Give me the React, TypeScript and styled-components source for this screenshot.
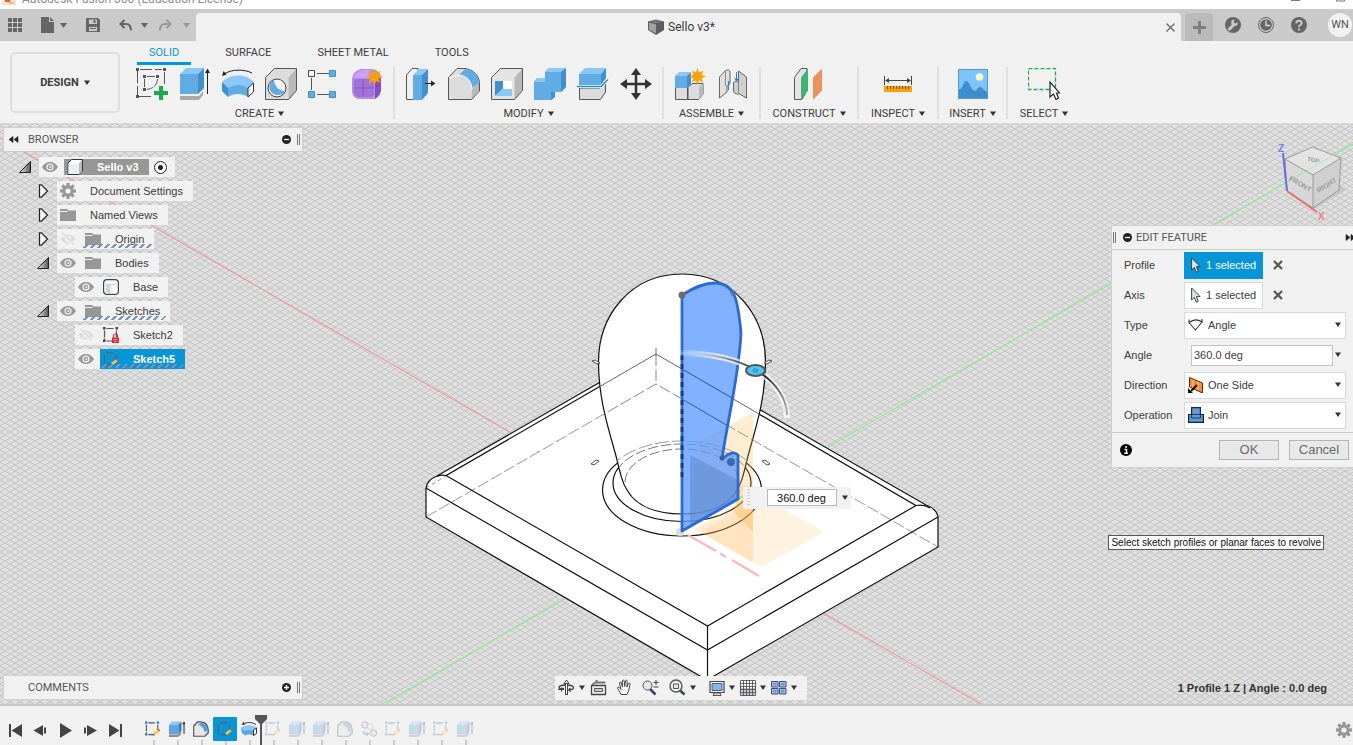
import React from "react";
import styled, { createGlobalStyle, css } from "styled-components";

const GlobalStyle = createGlobalStyle`
  *, *::before, *::after { box-sizing: border-box; }
  html, body { margin: 0; padding: 0; }
  body { font-family: "Liberation Sans", Arial, sans-serif; font-size: 11px; color: #3c3c3c; background: #f1f1f1; overflow: hidden; }
  button, input, select { font: inherit; color: inherit; margin: 0; }
  button { padding: 0; border: 0; background: none; }
  ul { list-style: none; margin: 0; padding: 0; }
  svg { display: block; flex: none; }
`;

const UI_FONT = `Roboto, "Liberation Sans", sans-serif`;

const Page = styled.div`
  display: flex;
  flex-direction: column;
  height: 100vh;
`;

/* ---------- window title and document tabs ---------- */

const TitleBar = styled.header`
  display: flex;
  align-items: flex-end;
  flex: none;
  height: 9px;
  overflow: hidden;
  background: #fff;
  color: #8c8c8c;
  font: 12px/16px ${UI_FONT};
  padding: 0 8px 2px 2px;
  gap: 6px;
`;

const WindowButtons = styled.div`
  display: flex;
  gap: 36px;
  margin-left: auto;
`;

const TabBar = styled.div`
  display: flex;
  align-items: center;
  flex: none;
  height: 32px;
  background: #cacaca;
  color: #666;
`;

const QuickBar = styled.div`
  display: flex;
  align-items: center;
  gap: 19px;
  width: 196px;
  padding-left: 8px;
`;

const QuickGroup = styled.div<{ $gap: number }>`
  display: flex;
  align-items: center;
  gap: ${(p) => p.$gap}px;
`;

const IconButton = styled.button<{ $w?: number; $h?: number }>`
  display: flex;
  align-items: center;
  justify-content: center;
  flex: none;
  ${(p) => p.$w && css`width: ${p.$w}px;`}
  ${(p) => p.$h && css`height: ${p.$h}px;`}
`;

const DocumentTab = styled.div`
  display: flex;
  align-items: center;
  align-self: flex-end;
  flex: 1;
  height: 28px;
  border-radius: 4px 4px 0 0;
  background: #f1f1f1;
  padding-right: 4px;
`;

const DocumentName = styled.div`
  display: flex;
  align-items: center;
  justify-content: center;
  flex: 1;
  gap: 4px;
  padding-left: 4px;
  color: #3c3c3c;
  font: 12px/16px ${UI_FONT};
`;

const NewTab = styled(IconButton)`
  align-self: flex-end;
  width: 28px;
  height: 28px;
  margin: 0 12px 0 4px;
  border-radius: 4px 4px 0 0;
  background: #bababa;
`;

const AccountArea = styled.div`
  display: flex;
  align-items: center;
  gap: 17px;
  padding-right: 1px;
`;

const Avatar = styled.button`
  width: 24px;
  height: 24px;
  margin-left: 4px;
  border-radius: 50%;
  background: #f1f1f1;
  color: #555;
  font: 11px/24px ${UI_FONT};
  text-align: center;
`;

/* ---------- ribbon ---------- */

const Ribbon = styled.div`
  display: flex;
  flex: none;
  height: 82px;
  background: #f1f1f1;
`;

const WorkspaceButton = styled.button`
  width: 110px;
  height: 61px;
  margin: 11px 6px 0 10px;
  border: 2px solid #dedede;
  border-radius: 5px;
  display: flex;
  align-items: center;
  justify-content: center;
  gap: 5px;
  font: 700 11px/16px ${UI_FONT};
`;

const RibbonMain = styled.div`
  flex: 1;
`;

const RibbonTabs = styled.nav`
  display: flex;
  gap: 22px;
  height: 24px;
  padding-left: 11px;
`;

const RibbonTab = styled.a<{ $active?: boolean }>`
  padding: 4px 12px 0;
  font: 11px/16px ${UI_FONT};
  text-decoration: none;
  color: ${(p) => (p.$active ? "#0696d7" : "#3c3c3c")};
  border-bottom: 3px solid ${(p) => (p.$active ? "#0696d7" : "transparent")};
`;

const RibbonGroups = styled.div`
  display: flex;
  margin-top: 2px;
`;

const Group = styled.section<{ $w: number; $last?: boolean }>`
  display: flex;
  flex-direction: column;
  align-items: center;
  width: ${(p) => p.$w}px;
  height: 52px;
  padding-top: 1px;
  border-right: ${(p) => (p.$last ? 0 : 2)}px solid #e0e0e0;
`;

const GroupTools = styled.div`
  display: flex;
  gap: 11px;
`;

const GroupLabel = styled.button`
  display: flex;
  align-items: center;
  gap: 4px;
  margin-top: 5px;
  font: 11px/18px ${UI_FONT};
  white-space: nowrap;
`;

/* ---------- canvas and what floats over it ---------- */

const Viewport = styled.main`
  position: relative;
  flex: 1;
  min-height: 0;
  overflow: hidden;
  background: #dfdfdf;
`;

const Scene = styled.svg`
  position: absolute;
  inset: 0;
  width: 100%;
  height: 100%;
`;

const ViewCube = styled.svg`
  position: absolute;
  top: 17px;
  right: 0;
`;

const BrowserArea = styled.aside`
  position: absolute;
  top: 4px;
  left: 3px;
  width: 300px;
`;

const PanelBar = styled.div`
  display: flex;
  align-items: center;
  width: 300px;
  height: 25px;
  padding: 0 2px 0 4px;
  background: #f1f1f1;
  border: 1px solid #cfcfcf;
  color: #555;
  font: 11px/16px ${UI_FONT};
`;

const PanelName = styled.span`
  flex: 1;
  margin-left: 9px;
`;

const Grip = styled.span`
  width: 3px;
  height: 11px;
  margin-left: 6px;
  border: solid #777;
  border-width: 0 1px;
`;

const PanelGrip = styled(Grip)`
  margin: 0 7px 0 0;
`;

const CommentsIndent = styled.span`
  width: 11px;
`;

const Tree = styled.ul`
  display: flex;
  flex-direction: column;
  gap: 4px;
  padding-top: 5px;
`;

const TreeRow = styled.li<{ $level: number }>`
  display: flex;
  align-items: center;
  height: 20px;
  padding-left: ${(p) => p.$level * 18 + 15}px;
`;

const TreeToggle = styled(IconButton)`
  width: 14px;
  height: 14px;
  margin-right: 7px;
`;

const NoToggle = styled.span`
  width: 21px;
`;

const TreeItem = styled.div`
  display: flex;
  align-items: center;
  height: 20px;
  background: #f1f1f1;
`;

const EyeButton = styled(IconButton)`
  width: 25px;
  padding: 0 6px 0 3px;
`;

const TreeLabel = styled.div<{ $tone?: "root" | "selected"; $hatch?: boolean }>`
  position: relative;
  display: flex;
  align-items: center;
  gap: 14px;
  height: ${(p) => (p.$tone === "root" ? 16 : 20)}px;
  padding: 0 10px 0 3px;
  line-height: 16px;
  ${(p) => p.$tone && css`color: #fff; font-weight: 700;`}
  ${(p) => p.$tone === "root" && css`background: #979797;`}
  ${(p) => p.$tone === "selected" && css`background: #0696d7;`}
  ${(p) =>
    p.$hatch &&
    css`
      &::after {
        content: "";
        position: absolute;
        left: 0;
        right: 2px;
        bottom: 1px;
        height: 4px;
        background: repeating-linear-gradient(135deg, transparent 0 3px, #7d91b8 3px 5px);
      }
    `}
`;

const ActiveRadio = styled.input`
  appearance: none;
  width: 13px;
  height: 13px;
  margin: 0 8px 0 5px;
  border: 1px solid #222;
  border-radius: 50%;
  background: radial-gradient(circle, #222 0 2px, #fff 3px);
`;

const FeaturePanel = styled.form`
  position: absolute;
  top: 102px;
  right: 0;
  width: 242px;
  background: #f1f1f1;
  border: 1px solid #cfcfcf;
  border-right: 0;
  line-height: 16px;
`;

const FeatureHead = styled.div`
  display: flex;
  align-items: center;
  height: 24px;
  padding-left: 1px;
  border-bottom: 1px solid #cfcfcf;
  color: #555;
  font: 11px/16px ${UI_FONT};
`;

const FeatureTitle = styled.span`
  flex: 1;
  margin-left: 4px;
`;

const Fields = styled.div`
  padding: 0 7px 2px 12px;
  border-bottom: 1px solid #cfcfcf;
`;

const Field = styled.div`
  display: flex;
  align-items: center;
  height: 30px;
`;

const FieldLabel = styled.label`
  flex: none;
  width: 60px;
`;

const Picker = styled.button<{ $active?: boolean }>`
  display: flex;
  align-items: center;
  gap: 5px;
  width: 79px;
  height: 27px;
  padding-left: 6px;
  border: 1px solid ${(p) => (p.$active ? "#0696d7" : "#d9d9d9")};
  background: ${(p) => (p.$active ? "#0696d7" : "#fff")};
  color: ${(p) => (p.$active ? "#fff" : "#3c3c3c")};
  white-space: nowrap;
`;

const ClearButton = styled(IconButton)`
  width: 20px;
  height: 20px;
  margin-left: 5px;
`;

const SelectBox = styled.div`
  display: flex;
  align-items: center;
  flex: 1;
  height: 27px;
  padding: 0 4px 0 3px;
  border: 1px solid #d9d9d9;
  background: #fff;
`;

const BareSelect = styled.select`
  appearance: none;
  flex: 1;
  min-width: 0;
  border: 0;
  padding: 0 0 0 4px;
  background: transparent;
  outline: 0;
`;

const AngleRow = styled.div`
  display: flex;
  align-items: center;
  flex: 1;
  min-width: 0;
  padding: 0 5px 0 7px;
  gap: 2px;
`;

const AngleInput = styled.input`
  flex: 1;
  min-width: 0;
  height: 21px;
  padding: 0 2px;
  border: 1px solid #c4c4c4;
  background: #fff;
`;

const FeatureFoot = styled.div`
  display: flex;
  align-items: center;
  gap: 10px;
  height: 34px;
  padding: 0 4px 0 8px;
`;

const DialogButton = styled.button`
  width: 60px;
  height: 20px;
  border: 1px solid #b5b5b5;
  background: #e8e8e8;
  color: #6a6a6a;
  font-size: 13px;
`;

const Spacer = styled.span`
  flex: 1;
`;

const FloatingInput = styled.div`
  position: absolute;
  left: calc(50% + 66px);
  top: calc(50% + 73px);
  display: flex;
  align-items: center;
  gap: 5px;
  width: 108px;
  height: 22px;
  padding: 0 2px 0 4px;
  background: #f1f1f1;
`;

const FloatGrip = styled.span`
  width: 3px;
  height: 18px;
  margin-right: 12px;
  background: repeating-linear-gradient(#cfcfcf 0 1px, transparent 1px 3px);
`;

const FloatValue = styled.input`
  width: 70px;
  height: 17px;
  padding: 0;
  border: 1px solid #b9b9b9;
  background: #fff;
  color: #111;
  text-align: center;
`;

const Tooltip = styled.div`
  position: absolute;
  right: 29px;
  top: 412px;
  height: 15px;
  padding: 0 2px;
  border: 1px solid #555;
  background: #fdfdfd;
  color: #111;
  font: 10px/13px "Liberation Sans", sans-serif;
  white-space: nowrap;
`;

const BottomOverlay = styled.div`
  position: absolute;
  left: 0;
  right: 0;
  bottom: 4px;
  display: grid;
  grid-template-columns: 1fr auto 1fr;
  align-items: center;
  padding-left: 3px;
`;

const NavBar = styled.div`
  display: flex;
  align-items: center;
  width: 252px;
  height: 24px;
  padding-left: 3px;
  background: #f1f1f1;
  margin-left: 6px;
`;

const NavItem = styled.button<{ $w: number }>`
  display: flex;
  align-items: center;
  gap: 4px;
  width: ${(p) => p.$w}px;
`;

const Status = styled.output`
  justify-self: end;
  padding-right: 26px;
  font: 700 11px/16px "Liberation Sans", sans-serif;
  color: #333;
`;

/* ---------- timeline ---------- */

const Timeline = styled.footer`
  display: flex;
  flex: none;
  height: 41px;
  padding-left: 3px;
  border-top: 2px solid #c9c9c9;
  background: #f1f1f1;
`;

const PlayButton = styled(IconButton)`
  width: 25px;
  height: 36px;
  margin-top: 6px;
`;

const SettingsButton = styled(IconButton)`
  width: 18px;
  height: 36px;
  margin-top: 6px;
`;

const Steps = styled.ol`
  display: flex;
  list-style: none;
  margin: 0 0 0 13px;
  padding: 11px 0 0;
`;

const Step = styled.li<{ $selected?: boolean; $future?: boolean }>`
  position: relative;
  width: 24px;
  height: 28px;
  background: linear-gradient(#c9c9c9, #c9c9c9) 12px 23px / 2px 5px no-repeat;
  & > button {
    width: 24px;
    height: 24px;
    background: ${(p) => (p.$selected ? "#0696d7" : "transparent")};
    border-radius: 1px;
  }
  & svg {
    opacity: ${(p) => (p.$future ? 0.3 : 1)};
  }
`;

const PlayheadAnchor = styled.span`
  position: relative;
  width: 0;
  height: 28px;
  margin: 11px 0 0 -216px;
`;

const Playhead = styled.svg`
  position: absolute;
  top: -3px;
  left: -7px;
`;

/* ---------- drawings ---------- */

type SvgProps = { s?: number; w?: number; h?: number; vb?: string; children: React.ReactNode };
const Svg = ({ s = 32, w, h, vb, children }: SvgProps) => (
  <svg width={w ?? s} height={h ?? s} viewBox={vb ?? `0 0 ${w ?? s} ${h ?? s}`} fill="none" aria-hidden="true">
    {children}
  </svg>
);

const Caret = ({ color = "#333" }: { color?: string }) => (
  <Svg w={6} h={6}><path d="M0 .5h6L3 5z" fill={color} /></Svg>
);

const BigCaret = ({ color }: { color: string }) => (
  <Svg w={7} h={5}><path d="M0 0h7L3.500 5z" fill={color} /></Svg>
);

const GearIcon = ({ color = "#979797" }: { color?: string }) => (
  <Svg s={16}>
    {[0, 45, 90, 135].map((a) => (
      <path key={a} d="M6.4 0h3.2v16H6.4z" fill={color} transform={`rotate(${a} 8 8)`} />
    ))}
    <circle cx="8" cy="8" r="5.8" fill={color} />
    <circle cx="8" cy="8" r="2.6" fill="#f1f1f1" />
  </Svg>
);

const EyeIcon = () => (
  <Svg s={16}>
    <path d="M0 8C2 4.5 4.800 3 8 3s6 1.500 8 5c-2 3.500-4.800 5-8 5S2 11.500 0 8z" fill="#979797" />
    <circle cx="8" cy="8" r="3.600" fill="#f1f1f1" />
    <circle cx="8" cy="8" r="2.300" fill="#979797" />
    <circle cx="8.300" cy="8" r="1" fill="#f1f1f1" />
  </Svg>
);

const HiddenEyeIcon = () => (
  <Svg s={16}>
    <path d="M0.500 8C2.500 5 5 3.500 8 3.500S13.500 5 15.500 8c-2 3-4.500 4.500-7.500 4.500S2.500 11 .5 8z" fill="#dcdcdc" />
    <circle cx="8" cy="8" r="3" fill="#f1f1f1" />
    <circle cx="8" cy="8" r="1.800" fill="#dcdcdc" />
    <path d="M2 2.500 14 14" stroke="#f1f1f1" strokeWidth="3" />
    <path d="M2.500 2 14 13.500" stroke="#dcdcdc" strokeWidth="1.500" />
  </Svg>
);

const FolderIcon = () => (
  <Svg s={16}>
    <path d="M0 2h7l1.500 1.500H16V14H0z" fill="#979797" />
    <path d="M0 4.500h7.500" stroke="#f1f1f1" />
  </Svg>
);

const CubeIcon = () => (
  <Svg s={16}>
    <path d="M1 4 4.500.5h11V12L12 15.500H1z" fill="#fff" stroke="#333" />
    <path d="m12 4 3-3V12L12 15z" fill="#bcbcbc" />
    <path d="M1.500 4.500h10.500v10.500h-10.500z" fill="#eceef2" />
  </Svg>
);

const CylinderIcon = () => (
  <Svg s={16}>
    <rect x=".6" y=".6" width="14.800" height="14.800" rx="3.500" fill="#fff" stroke="#3a4054" strokeWidth="1.200" />
    <path d="M3 5.500h4.500v9H4.500q-1.500-.5-1.500-2z" fill="#d0d2d9" />
    <path d="M7.500 5.500h2v9h-2z" fill="#eceef2" />
    <path d="M2 4.500c3 1.800 9 1.800 12 0" stroke="#c9ccd3" />
  </Svg>
);

const SketchBox = ({ dark, blue }: { dark?: boolean; blue?: boolean }) => (
  <>
    <path d="M1.500 3.500v10M13.500 3.500v8M3.500 1.500h8M3.500 14h7" stroke={dark ? "#6b5a50" : "#555"} strokeWidth="1.200" strokeDasharray="7 1" />
    {!dark && [[0, 0], [12.5, 0], [0, 12.5]].map(([x, y]) => (
      <rect key={`${x}-${y}`} x={x} y={y} width="2.500" height="2.500" fill={blue ? "#1c8ae0" : "#444"} />
    ))}
  </>
);

const Pencil = () => (
  <g>
    <path d="m8.500 14.500 1.200-3 4-3.300 1.800 2.200-4 3.300z" fill="#ffc04a" />
    <path d="m13.500 8.300 1-.8 1.900 2-1 .9z" fill="#e84c3d" />
    <path d="m8.300 14.800.6-1.500 1 1.200z" fill="#444" />
  </g>
);

const SketchIcon = ({ selected }: { selected?: boolean }) => (
  <Svg s={16} vb="0 0 17 16"><SketchBox dark={selected} blue /><Pencil /></Svg>
);

const LockedSketchIcon = () => (
  <Svg s={16}>
    <SketchBox />
    <path d="M9 10.500h7V16H9z" fill="#cf2b32" />
    <path d="M10.500 10.500V9a2 2 0 0 1 4 0v1.500" stroke="#cf2b32" strokeWidth="1.200" />
    <path d="M10.500 12.500h4M10.500 14.300h4" stroke="#f6a5a5" strokeWidth=".8" />
  </Svg>
);

const MiniExtrude = () => (
  <Svg s={16}>
    <path d="M0 13.500h9l3-2.500v2.500L9 16H0z" fill="#8d8d8d" />
    <path d="M0 3.500h9.500V13H0z" fill="#5ca7e0" />
    <path d="M0 3.500 3 .5h9.500l-3 3z" fill="#8cc9f7" />
    <path d="m9.500 3.500 3-3V10l-3 3z" fill="#2f7fc2" />
    <path d="M15 13V2M13.800 3.500 15 1l1 2.500" stroke="#222" />
  </Svg>
);

const MiniFillet = () => (
  <Svg s={16}>
    <path d="M.8 5 4.500.8H8c4.500.5 7 4 7.200 8V12L12 15.200H.8z" fill="#dcdcdc" stroke="#555" strokeWidth="1.300" />
    <path d="M8 1.500c4 .5 6.500 4 6.500 8l-3 1.500C11 7.500 9 4.500 5 3.800z" fill="#4e9fdc" />
    <path d="M1.500 5H5c4 .3 6 4 6.500 6.500v3H1.500z" fill="#e6e6e6" />
  </Svg>
);

const MiniRevolve = () => (
  <Svg s={16}>
    <path d="M2 3c4-2 9-2 13 .5" stroke="#333" />
    <path d="M.5 3.800 2.500.8l1.500 3z" fill="#333" />
    <path d="M0 7c4-3.500 12-3.500 16 0l-1 6-3 1.500c-2.500-1.500-5.500-1.500-8 0L1 12z" fill="#5ca7e0" />
    <path d="M0 7c4-3.500 12-3.500 16 0l-3.500 3c-3-1.500-6-1.500-9 0z" fill="#8cc9f7" />
    <path d="m12.500 9 3-2v5.500l-3 2z" fill="#fff" stroke="#333" />
  </Svg>
);

const MiniPattern = () => (
  <Svg s={16}>
    <circle cx="4" cy="4" r="3.200" stroke="#555" fill="#ddd" />
    <circle cx="9" cy="5.500" r="3" stroke="#777" fill="#eee" opacity=".6" />
    <circle cx="12.500" cy="12" r="3.200" stroke="#555" fill="#ddd" />
    <path d="M3 9.500V13h4M5.500 11.300 7.300 13l-1.800 1.800" stroke="#1c7fd0" strokeWidth="1.400" />
  </Svg>
);

const CursorIcon = ({ fill = "#dfe3ec", stroke = "#333" }: { fill?: string; stroke?: string }) => (
  <Svg w={10} h={16}><path d="M.6 1v12l2.700-2.500 2 4.700 2-.9-2-4.600 3.700-.2z" fill={fill} stroke={stroke} strokeWidth=".9" /></Svg>
);

const ClearIcon = () => (
  <Svg s={10}><path d="m1 1 8 8m0-8-8 8" stroke="#555" strokeWidth="2.200" /></Svg>
);

const DownTriangle = () => (
  <Svg s={14}>
    <defs>
      <linearGradient id="open" x1="0" y1="0" x2="1" y2="0"><stop offset="0" stopColor="#eee" /><stop offset="1" stopColor="#555" /></linearGradient>
    </defs>
    <path d="M12.500 1.500v11h-11z" fill="url(#open)" stroke="#222" />
  </Svg>
);

const RightTriangle = () => (
  <Svg s={14}><path d="M3.500.8h2l6 6.200-6 6.200h-2z" fill="#f4f4f4" stroke="#222" strokeWidth="1.200" /></Svg>
);

const RoundSign = ({ plus }: { plus?: boolean }) => (
  <Svg s={9}>
    <circle cx="4.500" cy="4.500" r="4.500" fill="#222" />
    <path d={plus ? "M2 4.500h5M4.500 2v5" : "M2 4.500h5"} stroke="#fff" strokeWidth="1.300" />
  </Svg>
);

const CollapseIcon = ({ right }: { right?: boolean }) => (
  <Svg w={11} h={7}>
    <path d={right ? "M1 .5v6l4-3zM6 .5v6l4-3z" : "M5 .5v6l-4-3zM10 .5v6l-4-3z"} fill="#222" stroke="#222" strokeWidth=".6" />
  </Svg>
);

const Burst = ({ x, y, r }: { x: number; y: number; r: number }) => (
  <path
    d={Array.from({ length: 16 }, (_, i) => {
      const rad = i % 2 ? r * 0.5 : r;
      const a = (i * Math.PI) / 8;
      return `${i ? "L" : "M"}${x + rad * Math.sin(a)} ${y - rad * Math.cos(a)}`;
    }).join("") + "z"}
    fill="#f9a10b"
  />
);

const tools = {
  sketch: (
    <Svg>
      <path d="M1.500 3v24M4 1.500h22M28.500 4v14M3 28.500h14" stroke="#555" strokeDasharray="12 3" />
      <path d="M0 0h3v3H0zM27 0h3v3h-3zM0 27h3v3H0zM7 7h3v3H7zM20 7h3v3h-3zM7 20h3v3H7z" fill="#555" />
      <path d="M8.500 11v8M11 8.500h8M21.500 11c-.5 6-4 9.500-10.500 10.500" stroke="#555" strokeDasharray="9 1" />
      <path d="M23 18h4v5h5v4h-5v5h-4v-5h-5v-4h5z" fill="#1fa84a" />
    </Svg>
  ),
  extrude: (
    <Svg>
      <path d="M1 28h19l4-5v4l-4 5H1z" fill="#a9a9a9" />
      <path d="M1 6h18v20H1z" fill="#62ace4" />
      <path d="m1 6 6-6h18l-6 6z" fill="#8ac8fa" />
      <path d="m19 6 6-6v20l-6 6z" fill="#4190cc" />
      <path d="M28.500 26V3" stroke="#222" />
      <path d="m26 5 2.500-4.500L31 5z" fill="#222" />
    </Svg>
  ),
  revolve: (
    <Svg>
      <path d="M2 6c8-5 20-5 28-1" stroke="#222" />
      <path d="m0 8 1.500-5 3 3.500z" fill="#222" />
      <path d="M0 14c9-9 23-9 32 0l-6 8c-6-4-14-4-20 0z" fill="#8ac8fa" />
      <path d="M6 20c6-4 14-4 20 0v9c-6-4-14-4-20 0z" fill="#62ace4" />
      <path d="M0 14v9l6 6v-9z" fill="#4190cc" />
      <path d="m26 20 5.500-5v9L26 29z" fill="#f5f5f5" stroke="#333" />
    </Svg>
  ),
  hole: (
    <Svg>
      <path d="M.5 9.500 9.500.5h22v22l-8 9H.5z" fill="#dcdcdc" />
      <path d="M23.500 9.500l8-9v22l-8 9z" fill="#b9b9b9" />
      <path d="M.5 9.500 9.500.5h22v22l-8 9H.5z" stroke="#555" />
      <circle cx="12" cy="20" r="9" fill="#f3f3f3" stroke="#444" />
      <path d="M9 12c-8 4-5 15 4 15 3 0 6-1.500 7-4-6 0-10-4-11-11z" fill="#62ace4" />
    </Svg>
  ),
  pattern: (
    <Svg>
      <path d="M3.500 10v12M9 5.500h12M9 26.500h12" stroke="#555" />
      <path d="M.5 2.500h6v6h-6z" fill="#fff" stroke="#444" />
      <path d="M21.500 2.500h6v6h-6zM21.500 23.500h6v6h-6zM.5 23.500h6v6h-6z" fill="#62ace4" stroke="#4190cc" />
    </Svg>
  ),
  form: (
    <Svg>
      <path d="M1 11q1-8 9-10h11q9 2 9 9v11q-1 8-7 10H8q-6-1-7-7z" fill="#b68ae6" />
      <path d="M24 10q6-4 6-1v12q0 6-6 10z" fill="#8450bd" />
      <path d="M2 10q4-7 10-8h10q-7 2-3 8z" fill="#c9a2f5" />
      <path d="M3 13q0-2 2-2h6v8H3zM13 11h8q2 0 2 2v6H13zM3 21h8v8H7q-4-1-4-4zM13 21h10v5q-1 3-4 3h-6z" fill="#a272db" />
      <path d="M12 11v18M3 20h20M25 19l4-2" stroke="#6b3ba5" strokeWidth=".9" />
      <Burst x={23.500} y={9} r={8.500} />
    </Svg>
  ),
  pressPull: (
    <Svg>
      <path d="M1.500 7 7 .5h6V24l-5 7.500H1.500z" fill="#f0f0f0" stroke="#555" />
      <path d="M8 7h9v25H8z" fill="#62ace4" /><path d="m8 7 6-6h9l-6 6z" fill="#8ac8fa" /><path d="m17 7 6-6v24l-6 7z" fill="#4190cc" />
      <path d="M20 15.500h8" stroke="#222" /><path d="m26 12.500 4.500 3-4.500 3z" fill="#222" />
    </Svg>
  ),
  fillet: (
    <Svg>
      <path d="M.5 9.500 9 .5h8c8 1 14 7 14.500 14V23l-8 8.500H.5z" fill="#dcdcdc" stroke="#555" />
      <path d="M17 1c8 1 14 7 14.500 14l-7.500 5C23 13 20 9 11 7z" fill="#62ace4" />
      <path d="m24 21 7-6v8l-7.500 8z" fill="#b9b9b9" />
      <path d="M1 9.500 11 7c8 1 12.500 6 13 14" stroke="#fff" />
    </Svg>
  ),
  shell: (
    <Svg>
      <path d="M.5 9.500 9.500.5h22v22l-8 9H.5z" fill="#e4e4e4" />
      <path d="M23.500 9.500l8-9v22l-8 9z" fill="#b9b9b9" />
      <path d="M.5 9.500 9.500.5h22v22l-8 9H.5z" stroke="#555" />
      <path d="M4 13h17v15H4z" fill="#fff" />
      <path d="M4 13h8v8l-8 7z" fill="#4190cc" /><path d="m4 28 7-7h10v7z" fill="#8ac8fa" />
    </Svg>
  ),
  combine: (
    <Svg>
      <path d="M0 14 3 10h8V4l4-4h17v19l-5 5h-6v5l-4 3H0z" fill="#62ace4" />
      <path d="m11 4 4-4h17l-5 4zM0 14l4-4h7v4z" fill="#8ac8fa" />
      <path d="m27 4 5-4v19l-5 5zM17 32v-8h4v5z" fill="#4190cc" />
    </Svg>
  ),
  split: (
    <Svg>
      <path d="M2 6h22v11H2z" fill="#62ace4" /><path d="m2 6 6-6h21l-5 6z" fill="#8ac8fa" /><path d="m24 6 5-6v10l-5 7z" fill="#4190cc" />
      <path d="M2.500 20h20l6-5v9l-5 7.500h-21z" fill="#dcdcdc" stroke="#555" />
      <path d="M0 18.500h24l7-7" stroke="#fff" strokeWidth="3" /><path d="M0 18.500h24l7-7" stroke="#1c8ae0" strokeWidth="1.500" />
    </Svg>
  ),
  move: (
    <Svg>
      <path d="M16 5v22M5 16h22" stroke="#333" strokeWidth="2.500" />
      <path d="m16 0 5 7H11zM16 32l5-7H11zM0 16l7-5v10zM32 16l-7-5v10z" fill="#333" />
    </Svg>
  ),
  component: (
    <Svg>
      <path d="M1.500 19.500h12v12h-12zM14 19.500l4-4h11V26l-4.500 5.500H14z" fill="#dcdcdc" stroke="#555" />
      <path d="m25 19 4-3.500V26l-4 5.500z" fill="#b9b9b9" />
      <path d="M1 8h12v12H1z" fill="#62ace4" /><path d="m1 8 4-4h12l-4 4z" fill="#8ac8fa" /><path d="m13 8 4-4v12l-4 4z" fill="#4190cc" />
      <Burst x={23.500} y={8.500} r={8.500} />
    </Svg>
  ),
  joint: (
    <Svg>
      <path d="M2.500 9 8 3q4-2.500 5 1v11q-1 3-3 3v6l-7.500 6z" fill="#e0e0e0" stroke="#666" />
      <path d="m29.500 30-7-4h-3q-3-1-3-3v-8q1-3 5-1V3l8 6z" fill="#cfcfcf" stroke="#666" />
      <path d="M8.500 4v14M21.500 13v12" stroke="#888" />
      <path d="M11.500 13v9M19.500 4v9m-2-3 2 3 2-3" stroke="#1c8ae0" />
    </Svg>
  ),
  plane: (
    <Svg>
      <path d="M1.500 9.500 8 .5h6v22l-5 9H1.500z" fill="#e4e4e4" stroke="#555" />
      <path d="m8 9.500 7-9v22l-7 9.500z" fill="#3fb575" /><path d="m20 9.500 9-9v22L20 32z" fill="#e8955b" />
    </Svg>
  ),
  measure: (
    <Svg>
      <path d="M2.500 8v9M29.500 8v9M4 12.500h24" stroke="#444" /><path d="m3 12.500 4-2.500v5zM29 12.500 25 10v5z" fill="#444" />
      <path d="M2 18h28v6H2z" fill="#f9a10b" /><path d="M5.500 18v3M8.500 18v3M11.500 18v3M14.500 18v3M17.500 18v3M20.500 18v3M23.500 18v3M26.500 18v3" stroke="#7d4d00" />
    </Svg>
  ),
  image: (
    <Svg>
      <path d="M1 1h30v30H1z" fill="#7cc4fb" /><circle cx="22.500" cy="9" r="3.800" fill="#fdfbc8" />
      <path d="M1 22c6-1 5-9 8-9 4 0 5 10 9 10 2 0 2-4 5-4 3 0 3 4 8 5v7H1z" fill="#3b8dcb" />
      <path d="M1.500 1.500h29v29h-29z" stroke="#4a9bd6" />
    </Svg>
  ),
  select: (
    <Svg>
      <path d="M.5 .5h27v21h-27z" stroke="#27a750" strokeDasharray="4 2" strokeWidth="1.300" />
      <path d="M22 14v15l3.500-3 2.500 5.500 2.500-1.500-2-5h3.200z" fill="#fff" stroke="#222" strokeWidth="1.200" />
    </Svg>
  ),
};

const groups: { name: string; w: number; icons: [string, React.ReactNode][] }[] = [
  { name: "CREATE", w: 269, icons: [["Create Sketch", tools.sketch], ["Extrude", tools.extrude], ["Revolve", tools.revolve], ["Hole", tools.hole], ["Pattern", tools.pattern], ["Form", tools.form]] },
  { name: "MODIFY", w: 269, icons: [["Press Pull", tools.pressPull], ["Fillet", tools.fillet], ["Shell", tools.shell], ["Combine", tools.combine], ["Split Body", tools.split], ["Move", tools.move]] },
  { name: "ASSEMBLE", w: 97, icons: [["New Component", tools.component], ["Joint", tools.joint]] },
  { name: "CONSTRUCT", w: 98, icons: [["Offset Plane", tools.plane]] },
  { name: "INSPECT", w: 80, icons: [["Measure", tools.measure]] },
  { name: "INSERT", w: 69, icons: [["Insert Image", tools.image]] },
  { name: "SELECT", w: 72, icons: [["Select", tools.select]] },
];

/* ---------- model scene ---------- */

const bulb =
  "M682 274C630 274 598.500 316 598.500 362C598.500 400 609 430 616 456C621 477 623 484 627 490C636 506 656 514 682 514C708 514 728 506 737 490C741 484 743 477 748 456C755 430 765.500 400 765.500 362C765.500 316 734 274 682 274Z";
const profile =
  "M682 295C693 288 704 283 715 283C726 283 733 290 736 300C739 311 740 322 741 333C739 376 727 423 722 459C727 455 733 450 738 455L738 499L682 531Z";

const Model = () => (
  <Scene viewBox="0 123 1353 581" preserveAspectRatio="xMidYMid slice" fill="none" aria-hidden="true">
    <defs>
      <pattern id="mesh" width="10" height="6" patternUnits="userSpaceOnUse">
        <path d="M0 0 10 6M10 0 0 6" stroke="#c0c0c0" strokeWidth=".9" />
      </pattern>
      <linearGradient id="arc" gradientUnits="userSpaceOnUse" x1="672" y1="0" x2="790" y2="0">
        <stop offset="0" stopColor="#fff" stopOpacity="0" /><stop offset=".5" stopColor="#777" /><stop offset=".8" stopColor="#222" /><stop offset="1" stopColor="#bbb" />
      </linearGradient>
      <linearGradient id="glow" gradientUnits="userSpaceOnUse" x1="672" y1="0" x2="790" y2="0">
        <stop offset="0" stopColor="#fff" stopOpacity="0" /><stop offset=".4" stopColor="#fff" stopOpacity=".7" /><stop offset="1" stopColor="#fff" stopOpacity=".7" />
      </linearGradient>
      <clipPath id="inBulb"><path d={bulb} /></clipPath>
    </defs>
    <rect x="-100" y="22" width="1600" height="800" fill="url(#mesh)" />
    <path d="M0 138 981 704" stroke="#f58a8a" />
    <path d="M383 704 1353 144" stroke="#7df07d" />
    <path d="M426 517V488Q427 480 437 476L656 350 926 505Q937 509 938 517V547L707 680Z" fill="#fff" />
    <g stroke="#999" strokeDasharray="12 3">
      <path d="M426 517 656 384 938 547M656 354V384" />
      <path d="M426 488 446 476" strokeDasharray="4 3" />
    </g>
    <g stroke="#111" strokeWidth="1.200">
      <path d="M426 517V488Q427 480 437 476L656 350 926 505Q937 509 938 517V547L707 680Z" />
      <path d="M437 476.500Q441 474.500 446 475.500L656 354 916 505.500Q924 504 930 508" />
      <path d="M446 475.500 707.500 626 916 505.500M426 488 707.500 650 938 517M707.500 626V680" />
      <ellipse cx="682" cy="490" rx="79.500" ry="46" />
      <ellipse cx="682" cy="483" rx="69" ry="38.500" />
      <path d={bulb} fill="#fff" />
    </g>
    <g stroke="#555" fill="#fff">
      <path d="m592 361 3-1 5 3-3 1zM772 361l-3-1-5 3 3 1zM591 464l5-4 3 1-5 4zM762 461l3-1 5 4-3 1z" />
    </g>
    <g clipPath="url(#inBulb)">
      <path d="M446 475.500 656 354 916 505.500M656 348V356" stroke="#666" />
      <path d="M426 517 656 384 938 547M656 354V384" stroke="#888" strokeDasharray="12 3" />
      <ellipse cx="682" cy="487" rx="79" ry="46" stroke="#999" strokeDasharray="14 3" />
      <path d="M613 483A69 39 0 0 1 751 483M625 482A57 33 0 0 1 739 482" stroke="#777" strokeDasharray="10 3" />
    </g>
    <g fill="#ffb84d">
      <path d="M695 444 753 412V487L690 520Z" opacity=".25" />
      <path d="M762 497 824 532 762 567 700 532Z" opacity=".18" />
      <path d="M695 529 734 506 753 490V563Z" opacity=".22" />
      <path d="M734 512 740 485 753 487V532Z" opacity=".4" />
    </g>
    <path d="M688 535 716 551M720 553.500 726 557M732 560 759 576" stroke="#ffb5b5" strokeWidth="2.200" />
    <path d="M738 499 748 493" stroke="#7df07d" strokeWidth="2" />
    <circle cx="680" cy="532" r="4" fill="#ddd" />
    <path d={profile} fill="#5b98ff" fillOpacity=".76" />
    <path d="M690 455 738 480V499L690 527Z" fill="#5680c4" fillOpacity=".45" />
    <path d="M682 369 734 399M682 399 728 426" stroke="#3561aa" />
    <path d={profile} stroke="#2b6bd0" strokeWidth="2.800" strokeLinejoin="round" />
    <path d="M682 355V480" stroke="#173d80" strokeWidth="2.800" strokeDasharray="5 4" />
    <circle cx="682" cy="295" r="3.500" fill="#6c6c6c" />
    <circle cx="733" cy="293" r="3" fill="#58779c" opacity=".5" />
    <circle cx="722" cy="458" r="2.500" fill="#355f9c" />
    <circle cx="731" cy="462" r="4" fill="#2b5aa2" opacity=".8" />
    <path d="M672 353C712 352 742 361 757 371C776 382 787 399 787 418" stroke="url(#glow)" strokeWidth="6" />
    <path d="M672 353C712 352 742 361 757 371C776 382 787 399 787 415" stroke="url(#arc)" strokeWidth="1.800" />
    <ellipse cx="755.500" cy="370.500" rx="9.500" ry="5.500" fill="#4fc4f7" stroke="#555" strokeWidth="2" />
    <ellipse cx="755.500" cy="370.500" rx="2.500" ry="1.500" stroke="#2b7da8" />
  </Scene>
);

const Cube = () => (
  <ViewCube width="80" height="84" viewBox="1273 140 80 84" fill="none" role="img" aria-label="View cube">
    <path d="M1290 192 1313 210 1346 190 1336 182Z" fill="#bdbdbd" opacity=".7" />
    <path d="M1285 159 1312.500 147 1341 158 1339 190 1313 208 1287 191Z" fill="#d9d9d9" fillOpacity=".85" />
    <path d="M1285 159 1312.500 147 1341 158 1313 175Z" fill="#e3e3e3" />
    <path d="M1313 175 1341 158 1339 190 1313 208Z" fill="#d0d0d0" />
    <path d="M1285 159 1312.500 147 1341 158 1339 190 1313 208 1287 191ZM1285 159 1313 175 1341 158M1313 175V208" stroke="#9a9a9a" />
    <path d="M1287 182 1353 144" stroke="#8de88d" opacity=".6" />
    <g fill="#9b9b9b" fontFamily="Liberation Sans, sans-serif" fontSize="7" fontWeight="700" textAnchor="middle">
      <text transform="translate(1299 186) rotate(30)">FRONT</text>
      <text transform="translate(1328 187) rotate(-32)">RIGHT</text>
      <text transform="translate(1313 162) rotate(12)" fontSize="6">TOP</text>
    </g>
    <path d="M1283 153 1287 191" stroke="#6b6be8" strokeWidth="2" />
    <path d="M1287 191 1317 212" stroke="#e07070" strokeWidth="2" />
    <text x="1278" y="152" fill="#8080e8" fontFamily="Liberation Sans, sans-serif" fontSize="10" fontWeight="700">Z</text>
    <text x="1318" y="220" fill="#ee8080" fontFamily="Liberation Sans, sans-serif" fontSize="10" fontWeight="700">X</text>
  </ViewCube>
);

/* ---------- data ---------- */

type Node = { label: string; level: number; toggle?: "open" | "closed"; eye?: "on" | "off"; icon: React.ReactNode; hatch?: boolean; tone?: "root" | "selected" };
const nodes: Node[] = [
  { label: "Sello v3", level: 0, toggle: "open", eye: "on", icon: <CubeIcon />, tone: "root" },
  { label: "Document Settings", level: 1, toggle: "closed", icon: <GearIcon /> },
  { label: "Named Views", level: 1, toggle: "closed", icon: <FolderIcon /> },
  { label: "Origin", level: 1, toggle: "closed", eye: "off", icon: <FolderIcon />, hatch: true },
  { label: "Bodies", level: 1, toggle: "open", eye: "on", icon: <FolderIcon /> },
  { label: "Base", level: 2, eye: "on", icon: <CylinderIcon /> },
  { label: "Sketches", level: 1, toggle: "open", eye: "on", icon: <FolderIcon />, hatch: true },
  { label: "Sketch2", level: 2, eye: "off", icon: <LockedSketchIcon /> },
  { label: "Sketch5", level: 2, eye: "on", icon: <SketchIcon selected />, tone: "selected", hatch: true },
];

const playback: [string, string][] = [
  ["Go to start", "M1 2h2v13H1zM14 2v13L3.500 8.500z"],
  ["Step back", "M10 3v11L.5 8.500zM11 5.500h2v6h-2z"],
  ["Play", "M2 1v15l12-7.500z"],
  ["Step forward", "M4 3v11l10-5.500zM1 5.500h2v6H1z"],
  ["Go to end", "M12 2h2v13h-2zM1 2v13l10.500-6.500z"],
];

type StepKind = "sketch" | "extrude" | "fillet" | "revolve" | "pattern";
const steps: StepKind[] = ["sketch", "extrude", "fillet", "sketch", "revolve", "sketch", "extrude", "extrude", "fillet", "pattern", "sketch", "extrude", "sketch", "extrude"];
const stepIcon = (kind: StepKind, selected: boolean) => {
  if (kind === "sketch") return <SketchIcon selected={selected} />;
  if (kind === "extrude") return <MiniExtrude />;
  if (kind === "fillet") return <MiniFillet />;
  if (kind === "revolve") return <MiniRevolve />;
  return <MiniPattern />;
};

const navItems: [string, number, boolean, React.ReactNode][] = [
  ["Orbit", 32, true, <Svg w={17} h={17}><path d="M6 9.500c-3 .3-5 .2-5-1 0-1.500 3-2.500 7-2.500s7.500 1 7.500 2.700c0 1.300-2 2-4.500 2.300" stroke="#444" strokeWidth="1.300" /><path d="M0 10.500h6M3.500 8.500v4M12.500 9l-1.800 2 2 1.600" stroke="#444" strokeWidth="1.200" /><path d="M8.500 2v14" stroke="#444" strokeWidth="3" /><path d="M8.500 2v13" stroke="#fff" /><path d="M6 4.500 8.500 1 11 4.500z" fill="#fff" stroke="#444" /></Svg>],
  ["Look At", 26, false, <Svg s={17}><path d="M1.500 6.500h14v9h-14z" fill="#eee" stroke="#444" strokeWidth="1.300" /><path d="M4.500 9.500h8v3h-8z" fill="#ccc" stroke="#555" /><path d="M2 5.500 7 1v2h8v1H7z" stroke="#555" fill="#aaa" strokeWidth=".8" /></Svg>],
  ["Pan", 26, false, <Svg s={17}><path d="M5 15.500C3.500 12 1.500 10 1.500 8.500 2.500 7.500 4 9 5 10.500L3.500 4C4 2.500 5 3 5.300 4L6.500 8 6.300 2C7 .5 8 .8 8.200 2L8.700 7.500 9.500 2C10 .8 11.200 1 11.200 2.300L10.900 8 12.500 4.500c.8-1 1.700-.4 1.500.8L12.500 12l-1.500 3.500z" fill="#fff" stroke="#444" /></Svg>],
  ["Zoom", 27, false, <Svg s={17}><path d="m8 10 5.500 5.500" stroke="#3a4566" strokeWidth="2.600" /><circle cx="5.500" cy="6.500" r="4.500" fill="#dfe9ef" stroke="#555" /><path d="M11.500 3.500h5M14 1v5M11.500 8h5" stroke="#444" /></Svg>],
  ["Fit", 40, true, <Svg s={17}><path d="m10 10.500 5.500 5" stroke="#3a4566" strokeWidth="2.600" /><circle cx="7" cy="7" r="6" fill="#eee" stroke="#555" strokeWidth="1.400" /><path d="M4.500 5h5v4.500h-5z" fill="#dce9dc" stroke="#555" /></Svg>],
  ["Display Settings", 31, true, <Svg s={16}><path d="M1 1.500h14v11H1z" fill="#fff" stroke="#444" strokeWidth="1.200" /><path d="M3 3.500h10v7H3z" fill="#8fb4e3" stroke="#3f5f95" /><path d="M5 13h6l1 2.500H4z" fill="#ddd" stroke="#555" /></Svg>],
  ["Grid and Snaps", 31, true, <Svg s={16}><path d="M.5.500h15v15H.5z" fill="#fff" /><path d="M0 8h16v8H0z" fill="#c9ccd3" /><path d="M.5.500h15v15H.5zM3.500 0v16M6.500 0v16M9.500 0v16M12.500 0v16M0 3.500h16M0 6.500h16M0 9.500h16M0 12.500h16" stroke="#555" strokeWidth=".9" /></Svg>],
  ["Viewports", 32, true, <Svg s={16}><path d="M.5 1.500h6.500v5.500H.5zM8.500 1.500H15v5.500H8.500zM.5 8.500h6.500V14H.5zM8.500 8.500H15V14H8.500z" fill="#a9c4e8" stroke="#34507f" /><path d="M2.500 3.500h2.500v1.500H2.500zM10.500 3.500H13v1.500h-2.500zM2.500 10.500h2.500V12H2.500zM10.500 10.500H13V12h-2.500z" stroke="#5d80b5" strokeWidth=".8" /></Svg>],
];

export default function App() {
  return (
    <Page>
      <GlobalStyle />
      <TitleBar>
        <Svg w={14} h={14}><path d="M0 0h14v12H0z" fill="#fbe0cc" /><path d="M3 4h5v5H3z" fill="#d8642a" /><path d="M7 9h5v2H7z" fill="#f3b58c" /></Svg>
        <span>Autodesk Fusion 360 (Education License)</span>
        <WindowButtons>
          <Svg s={9}><path d="M0 2.500h9" stroke="#777" /></Svg>
          <Svg s={9}><path d="M.5.500V3h8V.5" stroke="#777" /></Svg>
        </WindowButtons>
      </TitleBar>

      <TabBar>
        <QuickBar>
          <IconButton aria-label="Show data panel">
            <Svg s={14}><path d="M0 0h4v4H0zM5 0h4v4H5zM10 0h4v4h-4zM0 5h4v4H0zM5 5h4v4H5zM10 5h4v4h-4zM0 10h4v4H0zM5 10h4v4H5zM10 10h4v4h-4z" fill="#666" /></Svg>
          </IconButton>
          <QuickGroup $gap={6}>
            <IconButton aria-label="File"><Svg w={13} h={16}><path d="M0 0h8v5h5v11H0z" fill="#666" /><path d="m9 0 4 4H9z" fill="#666" /></Svg></IconButton>
            <BigCaret color="#666" />
          </QuickGroup>
          <IconButton aria-label="Save">
            <Svg s={14}><path d="M0 0h12l2 2v12H0z" fill="#666" /><path d="M3 1.500h8V6H3zM3 9h8v4H3z" fill="#cacaca" /><path d="M7.500 2h2v3h-2zM4 10h6v1H4z" fill="#666" /></Svg>
          </IconButton>
          <QuickGroup $gap={9}>
            <IconButton aria-label="Undo"><Svg w={13} h={12}><path d="M2 5h5q5 0 5 6.500M5.500 1 1.500 5l4 4" stroke="#666" strokeWidth="2" /></Svg></IconButton>
            <BigCaret color="#666" />
            <IconButton aria-label="Redo" $w={17}><Svg w={13} h={12}><path d="M11 5H6q-5 0-5 6.500M7.500 1l4 4-4 4" stroke="#999" strokeWidth="2" /></Svg></IconButton>
            <BigCaret color="#999" />
          </QuickGroup>
        </QuickBar>
        <DocumentTab>
          <DocumentName>
            <Svg s={16}><path d="M0 2.500 8 .500l8 2v8.500l-8 5-8-5z" fill="#5c5c5c" /><path d="m1 3.500 7 2v9L1 10.500z" fill="#a2a2a2" /><path d="m1 2.500 7-1.500 7 1.500-7 2z" fill="#777" /></Svg>
            <span>Sello v3*</span>
          </DocumentName>
          <IconButton $w={14} $h={14} aria-label="Close document"><Svg s={9}><path d="m.5.500 8 8m0-8-8 8" stroke="#666" strokeWidth="1.300" /></Svg></IconButton>
        </DocumentTab>
        <NewTab aria-label="New document"><Svg s={13}><path d="M0 6.500h13M6.500 0v13" stroke="#808080" strokeWidth="3" /></Svg></NewTab>
        <AccountArea>
          <IconButton aria-label="Extensions"><Svg s={16}><circle cx="8" cy="8" r="8" fill="#666" /><path d="M3.500 13 8.500 8" stroke="#cacaca" strokeWidth="3" /><path d="M12.800 5.500a3.300 3.300 0 1 1-3.400-3l-.6 3 1.200 1z" fill="#cacaca" /></Svg></IconButton>
          <IconButton aria-label="Job status"><Svg s={16}><circle cx="8" cy="8" r="7.500" stroke="#666" /><circle cx="8" cy="8" r="5.800" fill="#666" /><path d="M8 3.500V8.500h4" stroke="#e0e0e0" strokeWidth="1.300" /></Svg></IconButton>
          <IconButton aria-label="Help"><Svg s={16}><circle cx="8" cy="8" r="8" fill="#666" /><path d="M5.300 6.300C5.300 2.800 10.700 2.800 10.700 6c0 2-2.700 2-2.700 4M8 11.500v2" stroke="#cacaca" strokeWidth="2" /></Svg></IconButton>
          <Avatar>WN</Avatar>
        </AccountArea>
      </TabBar>

      <Ribbon>
        <WorkspaceButton>DESIGN <Caret /></WorkspaceButton>
        <RibbonMain>
          <RibbonTabs>
            <RibbonTab href="#solid" $active>SOLID</RibbonTab>
            <RibbonTab href="#surface">SURFACE</RibbonTab>
            <RibbonTab href="#sheet-metal">SHEET METAL</RibbonTab>
            <RibbonTab href="#tools">TOOLS</RibbonTab>
          </RibbonTabs>
          <RibbonGroups>
            {groups.map((g, i) => (
              <Group key={g.name} $w={g.w} $last={i === groups.length - 1}>
                <GroupTools>
                  {g.icons.map(([name, icon]) => (
                    <IconButton key={name} aria-label={name} $h={32}>{icon}</IconButton>
                  ))}
                </GroupTools>
                <GroupLabel>{g.name}<Caret /></GroupLabel>
              </Group>
            ))}
          </RibbonGroups>
        </RibbonMain>
      </Ribbon>

      <Viewport>
        <Model />
        <Cube />
        <BrowserArea>
          <PanelBar>
            <IconButton aria-label="Collapse browser"><CollapseIcon /></IconButton>
            <PanelName>BROWSER</PanelName>
            <IconButton aria-label="Minimise browser"><RoundSign /></IconButton>
            <Grip />
          </PanelBar>
          <Tree>
            {nodes.map((n) => (
              <TreeRow key={n.label} $level={n.level}>
                {n.toggle ? (
                  <TreeToggle aria-label={`Toggle ${n.label}`}>{n.toggle === "open" ? <DownTriangle /> : <RightTriangle />}</TreeToggle>
                ) : (
                  <NoToggle />
                )}
                <TreeItem>
                  {n.eye && <EyeButton aria-label={`Visibility of ${n.label}`}>{n.eye === "on" ? <EyeIcon /> : <HiddenEyeIcon />}</EyeButton>}
                  <TreeLabel $tone={n.tone} $hatch={n.hatch}>{n.icon}<span>{n.label}</span></TreeLabel>
                  {n.tone === "root" && <ActiveRadio type="radio" name="active" defaultChecked aria-label="Activate component" />}
                </TreeItem>
              </TreeRow>
            ))}
          </Tree>
        </BrowserArea>

        <FloatingInput>
          <FloatGrip />
          <FloatValue aria-label="Revolve angle" defaultValue="360.0 deg" />
          <Caret />
        </FloatingInput>

        <FeaturePanel onSubmit={(e) => e.preventDefault()}>
          <FeatureHead>
            <PanelGrip />
            <RoundSign />
            <FeatureTitle>EDIT FEATURE</FeatureTitle>
            <IconButton type="button" aria-label="Expand panel" $w={6}><CollapseIcon right /></IconButton>
          </FeatureHead>
          <Fields>
            <Field>
              <FieldLabel htmlFor="profile">Profile</FieldLabel>
              <Picker id="profile" type="button" $active><CursorIcon />1 selected</Picker>
              <ClearButton type="button" aria-label="Clear profile"><ClearIcon /></ClearButton>
            </Field>
            <Field>
              <FieldLabel htmlFor="axis">Axis</FieldLabel>
              <Picker id="axis" type="button"><CursorIcon />1 selected</Picker>
              <ClearButton type="button" aria-label="Clear axis"><ClearIcon /></ClearButton>
            </Field>
            <Field>
              <FieldLabel htmlFor="type">Type</FieldLabel>
              <SelectBox>
                <Svg s={16}><path d="M1 5.500 7.500 13 14 5M1 5.500q6.500-5 13-.5M4 4 1 5.500v-3M11 3.500l3 1.500V2" stroke="#333" strokeWidth="1.100" /></Svg>
                <BareSelect id="type"><option>Angle</option></BareSelect>
                <Caret />
              </SelectBox>
            </Field>
            <Field>
              <FieldLabel htmlFor="angle">Angle</FieldLabel>
              <AngleRow>
                <AngleInput id="angle" defaultValue="360.0 deg" />
                <Caret />
              </AngleRow>
            </Field>
            <Field>
              <FieldLabel htmlFor="direction">Direction</FieldLabel>
              <SelectBox>
                <Svg s={16}><path d="M1.500.500 14.500 6v10L1.500 10z" fill="#f58a3c" stroke="#5a2d0c" /><path d="M5 3v8M10 5v8" stroke="#ffb27a" strokeWidth="1.500" /><path d="m9 8-6 6" stroke="#111" strokeWidth="2" /><path d="M0 11v5h5z" fill="#111" /></Svg>
                <BareSelect id="direction"><option>One Side</option></BareSelect>
                <Caret />
              </SelectBox>
            </Field>
            <Field>
              <FieldLabel htmlFor="operation">Operation</FieldLabel>
              <SelectBox>
                <Svg s={16}><path d="M.6 7.500h3V.6h8.800v6.900h3v7.900H.6z" fill="#5f9bd6" stroke="#12253f" strokeWidth="1.200" /><path d="M3.600 7.500v3.500h8.800V7.500z" stroke="#12253f" strokeWidth=".8" /></Svg>
                <BareSelect id="operation"><option>Join</option></BareSelect>
                <Caret />
              </SelectBox>
            </Field>
          </Fields>
          <FeatureFoot>
            <IconButton type="button" aria-label="Information"><Svg s={12}><circle cx="6" cy="6" r="6" fill="#000" /><path d="M6 2v2M4.500 5.500H6.500V9M4.300 9.200h3.600" stroke="#fff" strokeWidth="1.500" /></Svg></IconButton>
            <Spacer />
            <DialogButton type="submit">OK</DialogButton>
            <DialogButton type="button">Cancel</DialogButton>
          </FeatureFoot>
        </FeaturePanel>

        <Tooltip role="tooltip">Select sketch profiles or planar faces to revolve</Tooltip>

        <BottomOverlay>
          <PanelBar>
            <CommentsIndent />
            <PanelName>COMMENTS</PanelName>
            <IconButton aria-label="Open comments"><RoundSign plus /></IconButton>
            <Grip />
          </PanelBar>
          <NavBar>
            {navItems.map(([name, w, menu, icon]) => (
              <NavItem key={name} $w={w} aria-label={name}>{icon}{menu && <Caret />}</NavItem>
            ))}
          </NavBar>
          <Status>1 Profile 1 Z | Angle : 0.0 deg</Status>
        </BottomOverlay>
      </Viewport>

      <Timeline>
        {playback.map(([name, d]) => (
          <PlayButton key={name} aria-label={name}><Svg w={15} h={17}><path d={d} fill="#444" /></Svg></PlayButton>
        ))}
        <Steps>
          {steps.map((kind, i) => (
            <Step key={i} $selected={i === 3} $future={i > 4}>
              <IconButton aria-label={`${kind} ${i + 1}`}>{stepIcon(kind, i === 3)}</IconButton>
            </Step>
          ))}
        </Steps>
        <PlayheadAnchor>
          <Playhead width="14" height="32" viewBox="0 0 14 32" aria-hidden="true"><path d="M1 1h12v4L8 10v22H6V10L1 5z" fill="#555" /></Playhead>
        </PlayheadAnchor>
        <Spacer />
        <SettingsButton aria-label="Timeline settings"><GearIcon /></SettingsButton>
      </Timeline>
    </Page>
  );
}
